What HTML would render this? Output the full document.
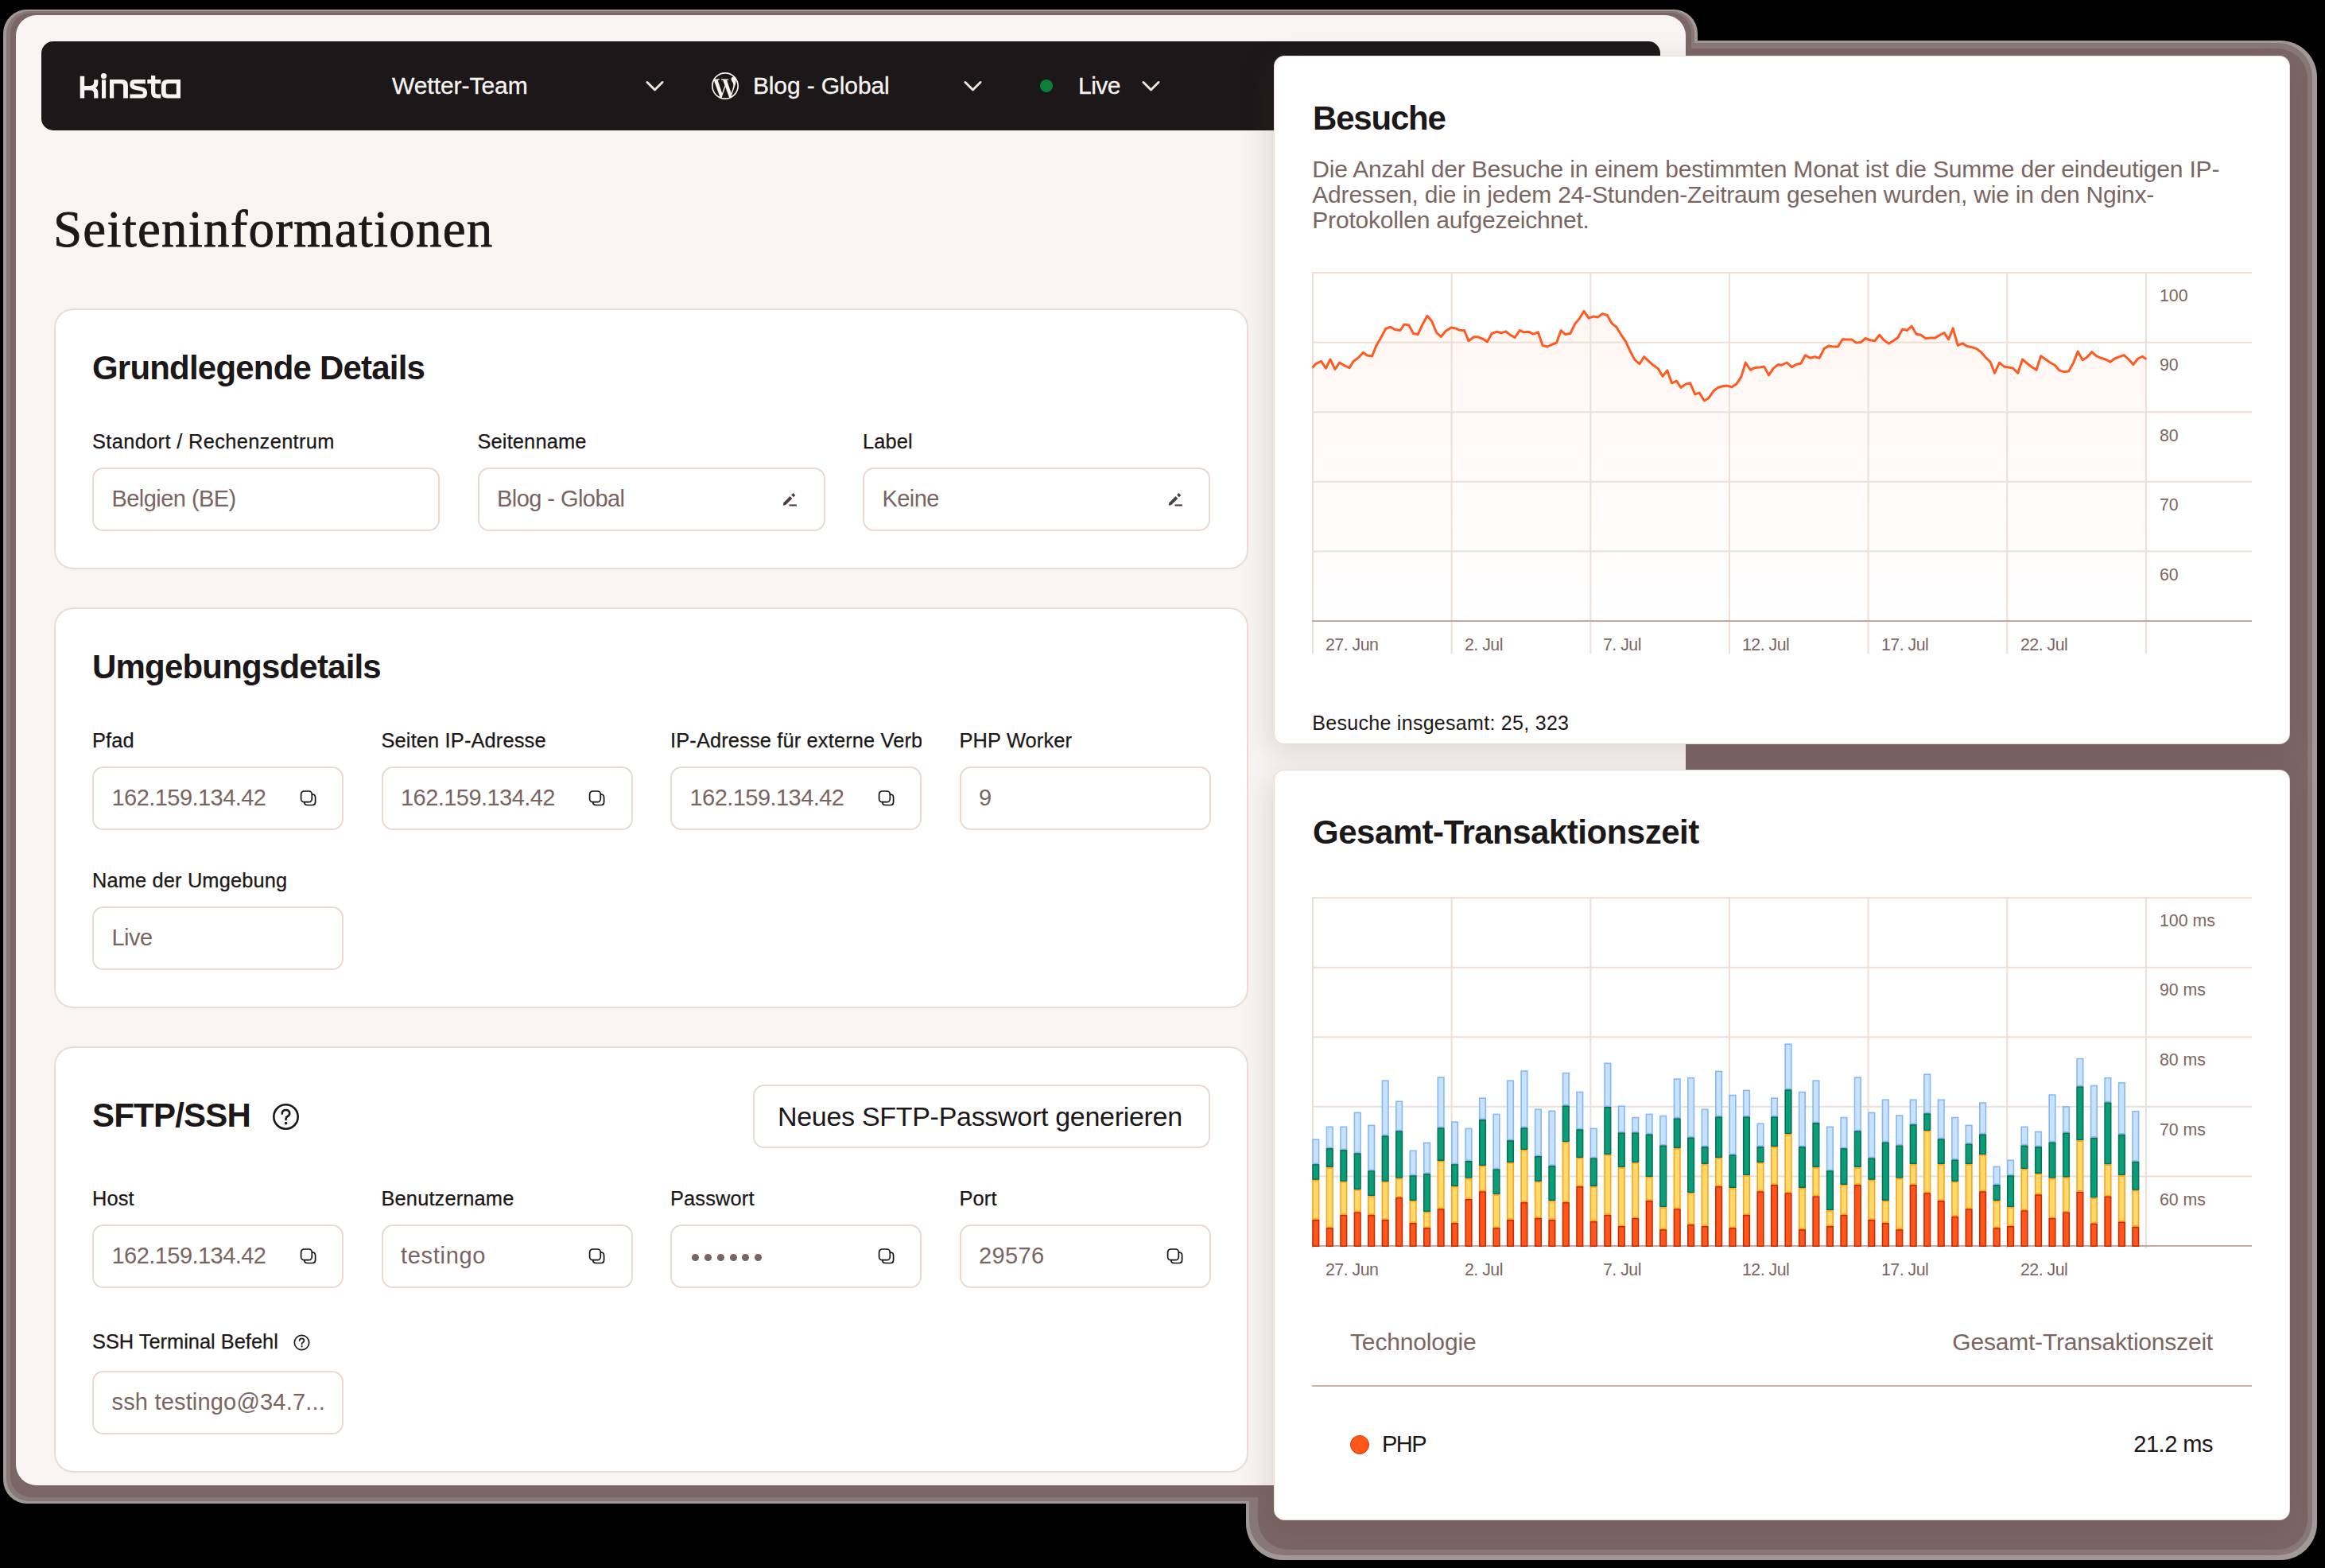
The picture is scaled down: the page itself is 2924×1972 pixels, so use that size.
<!DOCTYPE html>
<html><head><meta charset="utf-8"><title>Seiteninformationen</title>
<style>
html,body{margin:0;padding:0;}
body{width:2924px;height:1972px;background:#000;position:relative;overflow:hidden;font-family:'Liberation Sans', sans-serif;}
.t{position:absolute;white-space:nowrap;}
</style></head><body>
<div style="position:absolute;left:4px;top:12px;width:2131px;height:1879px;border-radius:30px;background:#a39797;"></div>
<div style="position:absolute;left:1567px;top:51px;width:1347px;height:1911px;border-radius:46px;background:#a39797;"></div>
<div style="position:absolute;left:8px;top:14px;width:2123px;height:1874px;border-radius:28px;background:#887979;"></div>
<div style="position:absolute;left:1570.5px;top:53.5px;width:1337.5px;height:1902.5px;border-radius:43px;background:#887979;"></div>
<div style="position:absolute;left:13px;top:16px;width:2114px;height:1867px;border-radius:26px;background:#7b6565;"></div>
<div style="position:absolute;left:1582px;top:61px;width:1320px;height:1888px;border-radius:38px;background:#7b6565;"></div>
<div style="position:absolute;left:20px;top:19px;width:2100px;height:1849px;border-radius:26px;background:#f8f4f1;"></div>
<div style="position:absolute;left:52px;top:52px;width:2036px;height:112px;border-radius:15px;background:#1c1819;"></div>
<svg style="position:absolute;left:0;top:0" width="240" height="140" viewBox="0 0 240 140">
<g fill="#f8f4f1">
<path d="M100.7 95.8H106.2V107.9H113Q118.2 107.9 118.2 103V100.3H123.4V103.5Q123.4 108.8 120.2 110.6Q123.4 112.6 123.4 117V123.6H118.2V118Q118.2 113.4 113.5 113.4H106.2V123.6H100.7Z"/>
<circle cx="130.5" cy="95.6" r="3.6"/>
<rect x="128" y="100.3" width="5.1" height="23.3"/>
<path d="M138 100H153.5Q160.9 100 160.9 107.5V123.6H155.1V108.5Q155.1 105.2 151.8 105.2H143.2V123.6H138Z"/>
<path d="M182.9 102.6H169Q165.9 102.6 165.9 106.2Q165.9 109.2 169.2 110L179 112.2Q182.5 113 182.5 116.7Q182.5 121 178.3 121H163.4" fill="none" stroke="#f8f4f1" stroke-width="5.2"/>
<path d="M192.65 95V116Q192.65 121 197.6 121H202.2" fill="none" stroke="#f8f4f1" stroke-width="5.2"/>
<rect x="185.3" y="100" width="16.9" height="5.1"/>
<path fill-rule="evenodd" d="M210.5 100H227V123.6H210.5Q202.9 123.6 202.9 116V107.6Q202.9 100 210.5 100ZM211.7 105.1Q208.7 105.1 208.7 108.1V115.5Q208.7 118.5 211.7 118.5H221.8V105.1Z"/>
</g></svg>
<div class="t" style="left:493.0px;top:92.6px;font-size:30px;line-height:30px;font-weight:400;color:#f8f4f1;letter-spacing:-0.05px;font-family:'Liberation Sans', sans-serif;-webkit-text-stroke:0.3px #f8f4f1;">Wetter-Team</div>
<div class="t" style="left:947.0px;top:92.6px;font-size:30px;line-height:30px;font-weight:400;color:#f8f4f1;letter-spacing:-0.15px;font-family:'Liberation Sans', sans-serif;-webkit-text-stroke:0.3px #f8f4f1;">Blog - Global</div>
<div class="t" style="left:1356.0px;top:92.6px;font-size:30px;line-height:30px;font-weight:400;color:#f8f4f1;letter-spacing:-0.5px;font-family:'Liberation Sans', sans-serif;-webkit-text-stroke:0.3px #f8f4f1;">Live</div>
<svg style="position:absolute;left:812px;top:101px" width="26" height="16" viewBox="0 0 26 16"><path d="M2 2.5L11.5 12L21 2.5" fill="none" stroke="#eee2db" stroke-width="3" stroke-linecap="round" stroke-linejoin="round"/></svg>
<svg style="position:absolute;left:1212px;top:101px" width="26" height="16" viewBox="0 0 26 16"><path d="M2 2.5L11.5 12L21 2.5" fill="none" stroke="#eee2db" stroke-width="3" stroke-linecap="round" stroke-linejoin="round"/></svg>
<svg style="position:absolute;left:1436px;top:101px" width="26" height="16" viewBox="0 0 26 16"><path d="M2 2.5L11.5 12L21 2.5" fill="none" stroke="#eee2db" stroke-width="3" stroke-linecap="round" stroke-linejoin="round"/></svg>
<svg style="position:absolute;left:895px;top:91px" width="34" height="34" viewBox="0 0 24 24"><path fill="#f8f4f1" d="M21.469 6.825c.84 1.537 1.318 3.3 1.318 5.175 0 3.979-2.156 7.456-5.363 9.325l3.295-9.527c.615-1.54.82-2.771.82-3.864 0-.405-.026-.78-.07-1.11m-7.981.105c.647-.03 1.232-.105 1.232-.105.582-.075.514-.93-.067-.899 0 0-1.755.135-2.88.135-1.064 0-2.85-.15-2.85-.15-.585-.03-.661.855-.075.885 0 0 .54.061 1.125.09l1.68 4.605-2.37 7.08L5.354 6.9c.649-.03 1.234-.1 1.234-.1.585-.075.516-.93-.065-.896 0 0-1.746.138-2.874.138-.2 0-.438-.008-.69-.015C4.911 3.15 8.235 1.215 12 1.215c2.809 0 5.365 1.072 7.286 2.833-.046-.003-.091-.009-.141-.009-1.06 0-1.812.923-1.812 1.914 0 .89.513 1.643 1.06 2.531.411.72.89 1.643.89 2.977 0 .915-.354 1.994-.821 3.479l-1.075 3.585-3.9-11.61.001.014zM12 22.784c-1.059 0-2.081-.153-3.048-.437l3.237-9.406 3.315 9.087c.024.053.05.101.078.149-1.12.393-2.325.609-3.582.609M1.211 12c0-1.564.336-3.05.935-4.39L7.29 21.709C3.694 19.96 1.212 16.271 1.211 12M12 0C5.385 0 0 5.385 0 12s5.385 12 12 12 12-5.385 12-12S18.615 0 12 0"/></svg>
<div style="position:absolute;left:1308px;top:100px;width:16px;height:16px;border-radius:50%;background:#0b7f3b;"></div>
<div class="t" style="left:67.0px;top:255.6px;font-size:65px;line-height:65px;font-weight:400;color:#1c1718;letter-spacing:1.2px;font-family:'Liberation Serif', serif;-webkit-text-stroke:0.8px #1c1718;">Seiteninformationen</div>
<div style="position:absolute;left:68px;top:388px;width:1502px;height:328px;box-sizing:border-box;border:2px solid #eadcd5;border-radius:24px;background:#fff;"></div>
<div style="position:absolute;left:68px;top:764px;width:1502px;height:504px;box-sizing:border-box;border:2px solid #eadcd5;border-radius:24px;background:#fff;"></div>
<div style="position:absolute;left:68px;top:1316px;width:1502px;height:536px;box-sizing:border-box;border:2px solid #eadcd5;border-radius:24px;background:#fff;"></div>
<div class="t" style="left:116.0px;top:442.1px;font-size:42px;line-height:42px;font-weight:700;color:#1c1718;letter-spacing:-0.8px;font-family:'Liberation Sans', sans-serif;">Grundlegende Details</div>
<div class="t" style="left:116.0px;top:542.7px;font-size:25.4px;line-height:25.4px;font-weight:400;color:#1c1718;letter-spacing:0.35px;font-family:'Liberation Sans', sans-serif;-webkit-text-stroke:0.25px #1c1718;">Standort / Rechenzentrum</div>
<div style="position:absolute;left:116px;top:588px;width:437px;height:80px;box-sizing:border-box;border:2px solid #e8d9d2;border-radius:14px;background:#fff;"></div>
<div class="t" style="left:140.5px;top:613.3px;font-size:29px;line-height:29px;font-weight:400;color:#7a6461;letter-spacing:-0.55px;font-family:'Liberation Sans', sans-serif;">Belgien (BE)</div>
<div class="t" style="left:600.5px;top:542.7px;font-size:25.4px;line-height:25.4px;font-weight:400;color:#1c1718;letter-spacing:0.15px;font-family:'Liberation Sans', sans-serif;-webkit-text-stroke:0.25px #1c1718;">Seitenname</div>
<div style="position:absolute;left:600.5px;top:588px;width:437px;height:80px;box-sizing:border-box;border:2px solid #e8d9d2;border-radius:14px;background:#fff;"></div>
<div class="t" style="left:625.0px;top:613.3px;font-size:29px;line-height:29px;font-weight:400;color:#7a6461;letter-spacing:-0.55px;font-family:'Liberation Sans', sans-serif;">Blog - Global</div>
<svg style="position:absolute;left:984.3px;top:617.5px" width="22" height="20" viewBox="0 0 22 20"><path d="M0.7 17.8L1.4 14.2L9.5 6.1L12.3 8.9L4.2 17Z" fill="#4a3f40"/><path d="M11.1 4.6L13.5 2.1L16.3 4.9L13.9 7.3Z" fill="#4a3f40"/><rect x="8.5" y="16.4" width="9.4" height="2.1" fill="#4a3f40"/></svg>
<div class="t" style="left:1085.0px;top:542.7px;font-size:25.4px;line-height:25.4px;font-weight:400;color:#1c1718;letter-spacing:0.15px;font-family:'Liberation Sans', sans-serif;-webkit-text-stroke:0.25px #1c1718;">Label</div>
<div style="position:absolute;left:1085px;top:588px;width:437px;height:80px;box-sizing:border-box;border:2px solid #e8d9d2;border-radius:14px;background:#fff;"></div>
<div class="t" style="left:1109.5px;top:613.3px;font-size:29px;line-height:29px;font-weight:400;color:#7a6461;letter-spacing:-0.55px;font-family:'Liberation Sans', sans-serif;">Keine</div>
<svg style="position:absolute;left:1468.8px;top:617.5px" width="22" height="20" viewBox="0 0 22 20"><path d="M0.7 17.8L1.4 14.2L9.5 6.1L12.3 8.9L4.2 17Z" fill="#4a3f40"/><path d="M11.1 4.6L13.5 2.1L16.3 4.9L13.9 7.3Z" fill="#4a3f40"/><rect x="8.5" y="16.4" width="9.4" height="2.1" fill="#4a3f40"/></svg>
<div class="t" style="left:116.0px;top:818.2px;font-size:42px;line-height:42px;font-weight:700;color:#1c1718;letter-spacing:-0.8px;font-family:'Liberation Sans', sans-serif;">Umgebungsdetails</div>
<div class="t" style="left:116.0px;top:918.7px;font-size:25.4px;line-height:25.4px;font-weight:400;color:#1c1718;letter-spacing:0.15px;font-family:'Liberation Sans', sans-serif;-webkit-text-stroke:0.25px #1c1718;">Pfad</div>
<div style="position:absolute;left:116px;top:964px;width:316px;height:80px;box-sizing:border-box;border:2px solid #e8d9d2;border-radius:14px;background:#fff;"></div>
<div class="t" style="left:140.5px;top:989.3px;font-size:29px;line-height:29px;font-weight:400;color:#7a6461;letter-spacing:-0.55px;font-family:'Liberation Sans', sans-serif;">162.159.134.42</div>
<svg style="position:absolute;left:376.5px;top:994px" width="24" height="24" viewBox="0 0 24 24"><rect x="1.6" y="1" width="13.7" height="13.7" rx="4" fill="none" stroke="#111" stroke-width="1.7"/><path d="M15.3 5H15.6Q19.6 5 19.6 9V14.5Q19.6 18.5 15.6 18.5H9.8Q5.8 18.5 5.8 14.7" fill="none" stroke="#111" stroke-width="1.7"/></svg>
<div class="t" style="left:479.5px;top:918.7px;font-size:25.4px;line-height:25.4px;font-weight:400;color:#1c1718;letter-spacing:0.15px;font-family:'Liberation Sans', sans-serif;-webkit-text-stroke:0.25px #1c1718;">Seiten IP-Adresse</div>
<div style="position:absolute;left:479.5px;top:964px;width:316px;height:80px;box-sizing:border-box;border:2px solid #e8d9d2;border-radius:14px;background:#fff;"></div>
<div class="t" style="left:504.0px;top:989.3px;font-size:29px;line-height:29px;font-weight:400;color:#7a6461;letter-spacing:-0.55px;font-family:'Liberation Sans', sans-serif;">162.159.134.42</div>
<svg style="position:absolute;left:740.0px;top:994px" width="24" height="24" viewBox="0 0 24 24"><rect x="1.6" y="1" width="13.7" height="13.7" rx="4" fill="none" stroke="#111" stroke-width="1.7"/><path d="M15.3 5H15.6Q19.6 5 19.6 9V14.5Q19.6 18.5 15.6 18.5H9.8Q5.8 18.5 5.8 14.7" fill="none" stroke="#111" stroke-width="1.7"/></svg>
<div class="t" style="left:843.0px;top:918.7px;font-size:25.4px;line-height:25.4px;font-weight:400;color:#1c1718;letter-spacing:0.15px;font-family:'Liberation Sans', sans-serif;width:316px;overflow:hidden;-webkit-text-stroke:0.25px #1c1718;">IP-Adresse für externe Verbindungen</div>
<div style="position:absolute;left:843px;top:964px;width:316px;height:80px;box-sizing:border-box;border:2px solid #e8d9d2;border-radius:14px;background:#fff;"></div>
<div class="t" style="left:867.5px;top:989.3px;font-size:29px;line-height:29px;font-weight:400;color:#7a6461;letter-spacing:-0.55px;font-family:'Liberation Sans', sans-serif;">162.159.134.42</div>
<svg style="position:absolute;left:1103.5px;top:994px" width="24" height="24" viewBox="0 0 24 24"><rect x="1.6" y="1" width="13.7" height="13.7" rx="4" fill="none" stroke="#111" stroke-width="1.7"/><path d="M15.3 5H15.6Q19.6 5 19.6 9V14.5Q19.6 18.5 15.6 18.5H9.8Q5.8 18.5 5.8 14.7" fill="none" stroke="#111" stroke-width="1.7"/></svg>
<div class="t" style="left:1206.5px;top:918.7px;font-size:25.4px;line-height:25.4px;font-weight:400;color:#1c1718;letter-spacing:0.15px;font-family:'Liberation Sans', sans-serif;-webkit-text-stroke:0.25px #1c1718;">PHP Worker</div>
<div style="position:absolute;left:1206.5px;top:964px;width:316px;height:80px;box-sizing:border-box;border:2px solid #e8d9d2;border-radius:14px;background:#fff;"></div>
<div class="t" style="left:1231.0px;top:989.3px;font-size:29px;line-height:29px;font-weight:400;color:#7a6461;letter-spacing:-0.55px;font-family:'Liberation Sans', sans-serif;">9</div>
<div class="t" style="left:116.0px;top:1094.7px;font-size:25.4px;line-height:25.4px;font-weight:400;color:#1c1718;letter-spacing:0.15px;font-family:'Liberation Sans', sans-serif;-webkit-text-stroke:0.25px #1c1718;">Name der Umgebung</div>
<div style="position:absolute;left:116px;top:1140px;width:316px;height:80px;box-sizing:border-box;border:2px solid #e8d9d2;border-radius:14px;background:#fff;"></div>
<div class="t" style="left:140.5px;top:1165.3px;font-size:29px;line-height:29px;font-weight:400;color:#7a6461;letter-spacing:-0.55px;font-family:'Liberation Sans', sans-serif;">Live</div>
<div class="t" style="left:116.0px;top:1382.2px;font-size:42px;line-height:42px;font-weight:700;color:#1c1718;letter-spacing:-0.8px;font-family:'Liberation Sans', sans-serif;">SFTP/SSH</div>
<svg style="position:absolute;left:341px;top:1386px" width="37" height="37" viewBox="0 0 37 37"><circle cx="18.5" cy="18.5" r="15.2" fill="none" stroke="#1c1718" stroke-width="2.6"/><path d="M13.8 14.6Q13.8 10 18.5 10Q23.2 10 23.2 14.3Q23.2 17 20.3 18.3Q18.6 19.1 18.6 21V22" fill="none" stroke="#1c1718" stroke-width="2.6" stroke-linecap="round"/><circle cx="18.6" cy="26.6" r="1.8" fill="#1c1718"/></svg>
<div style="position:absolute;left:947px;top:1364px;width:575px;height:80px;box-sizing:border-box;border:2px solid #e8d9d2;border-radius:14px;background:#fff;"></div>
<div class="t" style="left:978.0px;top:1387.2px;font-size:34px;line-height:34px;font-weight:400;color:#1c1718;letter-spacing:-0.3px;font-family:'Liberation Sans', sans-serif;">Neues SFTP-Passwort generieren</div>
<div class="t" style="left:116.0px;top:1494.7px;font-size:25.4px;line-height:25.4px;font-weight:400;color:#1c1718;letter-spacing:0.15px;font-family:'Liberation Sans', sans-serif;-webkit-text-stroke:0.25px #1c1718;">Host</div>
<div style="position:absolute;left:116px;top:1540px;width:316px;height:80px;box-sizing:border-box;border:2px solid #e8d9d2;border-radius:14px;background:#fff;"></div>
<div class="t" style="left:140.5px;top:1565.3px;font-size:29px;line-height:29px;font-weight:400;color:#7a6461;letter-spacing:-0.55px;font-family:'Liberation Sans', sans-serif;">162.159.134.42</div>
<svg style="position:absolute;left:376.5px;top:1570px" width="24" height="24" viewBox="0 0 24 24"><rect x="1.6" y="1" width="13.7" height="13.7" rx="4" fill="none" stroke="#111" stroke-width="1.7"/><path d="M15.3 5H15.6Q19.6 5 19.6 9V14.5Q19.6 18.5 15.6 18.5H9.8Q5.8 18.5 5.8 14.7" fill="none" stroke="#111" stroke-width="1.7"/></svg>
<div class="t" style="left:479.5px;top:1494.7px;font-size:25.4px;line-height:25.4px;font-weight:400;color:#1c1718;letter-spacing:0.15px;font-family:'Liberation Sans', sans-serif;-webkit-text-stroke:0.25px #1c1718;">Benutzername</div>
<div style="position:absolute;left:479.5px;top:1540px;width:316px;height:80px;box-sizing:border-box;border:2px solid #e8d9d2;border-radius:14px;background:#fff;"></div>
<div class="t" style="left:504.0px;top:1565.3px;font-size:29px;line-height:29px;font-weight:400;color:#7a6461;letter-spacing:0.7px;font-family:'Liberation Sans', sans-serif;">testingo</div>
<svg style="position:absolute;left:740.0px;top:1570px" width="24" height="24" viewBox="0 0 24 24"><rect x="1.6" y="1" width="13.7" height="13.7" rx="4" fill="none" stroke="#111" stroke-width="1.7"/><path d="M15.3 5H15.6Q19.6 5 19.6 9V14.5Q19.6 18.5 15.6 18.5H9.8Q5.8 18.5 5.8 14.7" fill="none" stroke="#111" stroke-width="1.7"/></svg>
<div class="t" style="left:843.0px;top:1494.7px;font-size:25.4px;line-height:25.4px;font-weight:400;color:#1c1718;letter-spacing:0.15px;font-family:'Liberation Sans', sans-serif;-webkit-text-stroke:0.25px #1c1718;">Passwort</div>
<div style="position:absolute;left:843px;top:1540px;width:316px;height:80px;box-sizing:border-box;border:2px solid #e8d9d2;border-radius:14px;background:#fff;"></div>
<div style="position:absolute;left:870.3px;top:1577.2px;width:9px;height:9px;border-radius:50%;background:#7a6461"></div><div style="position:absolute;left:886.0px;top:1577.2px;width:9px;height:9px;border-radius:50%;background:#7a6461"></div><div style="position:absolute;left:901.8px;top:1577.2px;width:9px;height:9px;border-radius:50%;background:#7a6461"></div><div style="position:absolute;left:917.5px;top:1577.2px;width:9px;height:9px;border-radius:50%;background:#7a6461"></div><div style="position:absolute;left:933.3px;top:1577.2px;width:9px;height:9px;border-radius:50%;background:#7a6461"></div><div style="position:absolute;left:949.0px;top:1577.2px;width:9px;height:9px;border-radius:50%;background:#7a6461"></div>
<svg style="position:absolute;left:1103.5px;top:1570px" width="24" height="24" viewBox="0 0 24 24"><rect x="1.6" y="1" width="13.7" height="13.7" rx="4" fill="none" stroke="#111" stroke-width="1.7"/><path d="M15.3 5H15.6Q19.6 5 19.6 9V14.5Q19.6 18.5 15.6 18.5H9.8Q5.8 18.5 5.8 14.7" fill="none" stroke="#111" stroke-width="1.7"/></svg>
<div class="t" style="left:1206.5px;top:1494.7px;font-size:25.4px;line-height:25.4px;font-weight:400;color:#1c1718;letter-spacing:0.15px;font-family:'Liberation Sans', sans-serif;-webkit-text-stroke:0.25px #1c1718;">Port</div>
<div style="position:absolute;left:1206.5px;top:1540px;width:316px;height:80px;box-sizing:border-box;border:2px solid #e8d9d2;border-radius:14px;background:#fff;"></div>
<div class="t" style="left:1231.0px;top:1565.3px;font-size:29px;line-height:29px;font-weight:400;color:#7a6461;letter-spacing:0.4px;font-family:'Liberation Sans', sans-serif;">29576</div>
<svg style="position:absolute;left:1467.0px;top:1570px" width="24" height="24" viewBox="0 0 24 24"><rect x="1.6" y="1" width="13.7" height="13.7" rx="4" fill="none" stroke="#111" stroke-width="1.7"/><path d="M15.3 5H15.6Q19.6 5 19.6 9V14.5Q19.6 18.5 15.6 18.5H9.8Q5.8 18.5 5.8 14.7" fill="none" stroke="#111" stroke-width="1.7"/></svg>
<div class="t" style="left:116.0px;top:1674.9px;font-size:25.4px;line-height:25.4px;font-weight:400;color:#1c1718;letter-spacing:0px;font-family:'Liberation Sans', sans-serif;-webkit-text-stroke:0.25px #1c1718;">SSH Terminal Befehl</div>
<div style="position:absolute;left:116px;top:1724px;width:316px;height:80px;box-sizing:border-box;border:2px solid #e8d9d2;border-radius:14px;background:#fff;"></div>
<div class="t" style="left:140.5px;top:1749.3px;font-size:29px;line-height:29px;font-weight:400;color:#7a6461;letter-spacing:0.18px;font-family:'Liberation Sans', sans-serif;">ssh testingo@34.7...</div>
<svg style="position:absolute;left:368px;top:1677px" width="23" height="23" viewBox="0 0 23 23"><circle cx="11.5" cy="11.5" r="9.2" fill="none" stroke="#1c1718" stroke-width="1.7"/><path d="M8.6 9.1Q8.6 6.3 11.5 6.3Q14.4 6.3 14.4 8.9Q14.4 10.6 12.6 11.4Q11.6 11.9 11.6 13V13.6" fill="none" stroke="#1c1718" stroke-width="1.7" stroke-linecap="round"/><circle cx="11.6" cy="16.4" r="1.1" fill="#1c1718"/></svg>
<div style="position:absolute;left:1602px;top:70px;width:1278px;height:866px;box-sizing:border-box;border:1.75px solid #ebdcd4;border-radius:13px;background:#fff;box-shadow:-6px 10px 36px rgba(90,60,55,0.16);"></div>
<div style="position:absolute;left:1602px;top:968px;width:1278px;height:944px;box-sizing:border-box;border:1.75px solid #ebdcd4;border-radius:13px;background:#fff;box-shadow:-6px 10px 36px rgba(90,60,55,0.16);"></div>
<div class="t" style="left:1651.0px;top:128.3px;font-size:42px;line-height:42px;font-weight:700;color:#1c1718;letter-spacing:-1.2px;font-family:'Liberation Sans', sans-serif;">Besuche</div>
<div class="t" style="left:1650.3px;top:198.4px;font-size:30px;line-height:30px;font-weight:400;color:#7b6562;letter-spacing:-0.2px;font-family:'Liberation Sans', sans-serif;">Die Anzahl der Besuche in einem bestimmten Monat ist die Summe der eindeutigen IP-</div>
<div class="t" style="left:1650.3px;top:230.3px;font-size:30px;line-height:30px;font-weight:400;color:#7b6562;letter-spacing:-0.2px;font-family:'Liberation Sans', sans-serif;">Adressen, die in jedem 24-Stunden-Zeitraum gesehen wurden, wie in den Nginx-</div>
<div class="t" style="left:1650.3px;top:262.2px;font-size:30px;line-height:30px;font-weight:400;color:#7b6562;letter-spacing:-0.2px;font-family:'Liberation Sans', sans-serif;">Protokollen aufgezeichnet.</div>
<svg style="position:absolute;left:0;top:0" width="2924" height="1972" viewBox="0 0 2924 1972"><defs><linearGradient id="ag" x1="0" y1="0" x2="0" y2="1"><stop offset="0" stop-color="#ff6a33" stop-opacity="0.06"/><stop offset="1" stop-color="#ff6a33" stop-opacity="0.0"/></linearGradient></defs><path d="M1650.5 462.6 L1654.8 457.6 L1661.5 454.3 L1667.4 463.3 L1673.0 452.0 L1679.0 464.3 L1684.7 456.0 L1691.3 460.0 L1697.0 462.6 L1702.2 454.3 L1707.9 450.3 L1714.5 443.4 L1719.5 447.0 L1725.5 448.0 L1731.0 434.4 L1736.0 426.0 L1742.7 413.5 L1748.7 411.2 L1754.3 414.5 L1761.0 415.5 L1766.0 408.0 L1771.9 408.9 L1777.5 419.5 L1783.2 420.5 L1789.0 408.0 L1795.0 397.3 L1800.7 404.0 L1806.7 418.5 L1812.3 423.5 L1818.3 416.2 L1825.0 411.9 L1830.6 412.9 L1835.5 415.2 L1841.5 415.5 L1847.0 428.8 L1853.8 423.8 L1858.8 423.8 L1864.7 426.1 L1870.4 430.0 L1876.0 419.5 L1882.6 417.2 L1888.0 418.8 L1893.6 416.8 L1899.2 421.1 L1905.2 424.5 L1911.2 415.5 L1916.8 417.8 L1922.4 417.2 L1928.4 420.1 L1934.4 417.8 L1940.0 434.4 L1946.0 436.0 L1951.6 433.4 L1957.6 431.0 L1963.2 415.5 L1968.2 420.5 L1974.8 419.5 L1980.8 407.2 L1986.4 400.6 L1992.0 391.3 L1998.0 400.2 L2004.0 397.9 L2009.6 398.9 L2015.3 394.6 L2021.2 396.3 L2027.2 406.9 L2032.9 411.2 L2038.8 421.1 L2044.5 429.4 L2050.4 442.0 L2056.0 452.6 L2062.0 457.6 L2067.7 448.7 L2073.6 454.3 L2079.3 459.3 L2085.3 463.6 L2090.9 473.2 L2096.9 465.9 L2102.5 481.8 L2108.5 479.2 L2114.0 487.5 L2120.0 483.1 L2125.7 481.8 L2131.7 495.8 L2137.3 494.1 L2143.3 504.0 L2148.9 500.7 L2154.9 491.8 L2160.5 487.5 L2166.5 485.8 L2172.1 485.1 L2178.0 486.8 L2183.7 483.1 L2189.7 474.2 L2195.3 456.0 L2201.3 465.2 L2207.0 462.6 L2212.9 461.9 L2218.6 460.9 L2224.5 471.9 L2230.2 463.3 L2236.1 458.6 L2240.0 459.3 L2247.3 456.0 L2253.3 461.6 L2259.2 458.3 L2264.9 457.0 L2270.5 446.7 L2276.5 450.3 L2282.5 448.7 L2288.1 450.3 L2294.1 438.4 L2299.7 435.1 L2305.7 436.1 L2311.3 436.1 L2317.3 426.8 L2322.9 427.1 L2328.9 427.1 L2334.5 431.1 L2340.5 430.4 L2346.1 425.5 L2352.1 427.8 L2357.7 428.8 L2363.7 421.2 L2369.3 427.8 L2375.3 432.1 L2381.0 428.8 L2386.9 424.5 L2392.6 413.9 L2398.5 415.5 L2404.2 410.2 L2410.1 420.2 L2415.8 421.2 L2421.7 425.5 L2427.4 425.1 L2433.4 425.1 L2439.0 421.8 L2445.0 418.5 L2450.6 426.8 L2456.2 412.9 L2462.2 434.4 L2468.2 431.8 L2473.8 435.4 L2479.8 436.7 L2485.4 438.4 L2491.4 442.7 L2497.0 449.3 L2503.0 455.0 L2508.6 469.2 L2514.6 456.0 L2520.2 461.0 L2526.2 462.0 L2531.9 463.3 L2537.8 469.2 L2543.5 452.0 L2549.4 457.0 L2555.1 461.6 L2561.0 465.3 L2566.7 447.7 L2572.7 452.0 L2578.3 456.0 L2584.3 459.3 L2589.9 465.9 L2595.9 467.6 L2601.5 466.9 L2607.5 456.6 L2613.1 442.0 L2619.1 452.7 L2624.7 449.3 L2630.7 442.7 L2636.3 447.7 L2642.3 450.3 L2648.0 452.0 L2653.9 455.3 L2659.5 451.0 L2665.5 448.7 L2671.2 446.7 L2677.1 452.0 L2682.8 458.6 L2688.7 451.0 L2694.4 448.3 L2699.3 451.7 L2699.3 780 L1650.5 780 Z" fill="url(#ag)"/><rect x="1650" y="342.10" width="1182" height="2" fill="#ecdfd8"/><rect x="1650" y="429.68" width="1182" height="2" fill="#ecdfd8"/><rect x="1650" y="517.26" width="1182" height="2" fill="#ecdfd8"/><rect x="1650" y="604.84" width="1182" height="2" fill="#ecdfd8"/><rect x="1650" y="692.42" width="1182" height="2" fill="#ecdfd8"/><rect x="1650.00" y="342.10" width="2" height="479.90" fill="#ecdfd8"/><rect x="1824.65" y="342.10" width="2" height="479.90" fill="#ecdfd8"/><rect x="1999.30" y="342.10" width="2" height="479.90" fill="#ecdfd8"/><rect x="2173.95" y="342.10" width="2" height="479.90" fill="#ecdfd8"/><rect x="2348.60" y="342.10" width="2" height="479.90" fill="#ecdfd8"/><rect x="2523.25" y="342.10" width="2" height="479.90" fill="#ecdfd8"/><rect x="2697.90" y="342.10" width="2" height="479.90" fill="#ecdfd8"/><rect x="1650" y="780.00" width="1182" height="2" fill="#c3a8a0"/><path d="M1650.5 462.6 L1654.8 457.6 L1661.5 454.3 L1667.4 463.3 L1673.0 452.0 L1679.0 464.3 L1684.7 456.0 L1691.3 460.0 L1697.0 462.6 L1702.2 454.3 L1707.9 450.3 L1714.5 443.4 L1719.5 447.0 L1725.5 448.0 L1731.0 434.4 L1736.0 426.0 L1742.7 413.5 L1748.7 411.2 L1754.3 414.5 L1761.0 415.5 L1766.0 408.0 L1771.9 408.9 L1777.5 419.5 L1783.2 420.5 L1789.0 408.0 L1795.0 397.3 L1800.7 404.0 L1806.7 418.5 L1812.3 423.5 L1818.3 416.2 L1825.0 411.9 L1830.6 412.9 L1835.5 415.2 L1841.5 415.5 L1847.0 428.8 L1853.8 423.8 L1858.8 423.8 L1864.7 426.1 L1870.4 430.0 L1876.0 419.5 L1882.6 417.2 L1888.0 418.8 L1893.6 416.8 L1899.2 421.1 L1905.2 424.5 L1911.2 415.5 L1916.8 417.8 L1922.4 417.2 L1928.4 420.1 L1934.4 417.8 L1940.0 434.4 L1946.0 436.0 L1951.6 433.4 L1957.6 431.0 L1963.2 415.5 L1968.2 420.5 L1974.8 419.5 L1980.8 407.2 L1986.4 400.6 L1992.0 391.3 L1998.0 400.2 L2004.0 397.9 L2009.6 398.9 L2015.3 394.6 L2021.2 396.3 L2027.2 406.9 L2032.9 411.2 L2038.8 421.1 L2044.5 429.4 L2050.4 442.0 L2056.0 452.6 L2062.0 457.6 L2067.7 448.7 L2073.6 454.3 L2079.3 459.3 L2085.3 463.6 L2090.9 473.2 L2096.9 465.9 L2102.5 481.8 L2108.5 479.2 L2114.0 487.5 L2120.0 483.1 L2125.7 481.8 L2131.7 495.8 L2137.3 494.1 L2143.3 504.0 L2148.9 500.7 L2154.9 491.8 L2160.5 487.5 L2166.5 485.8 L2172.1 485.1 L2178.0 486.8 L2183.7 483.1 L2189.7 474.2 L2195.3 456.0 L2201.3 465.2 L2207.0 462.6 L2212.9 461.9 L2218.6 460.9 L2224.5 471.9 L2230.2 463.3 L2236.1 458.6 L2240.0 459.3 L2247.3 456.0 L2253.3 461.6 L2259.2 458.3 L2264.9 457.0 L2270.5 446.7 L2276.5 450.3 L2282.5 448.7 L2288.1 450.3 L2294.1 438.4 L2299.7 435.1 L2305.7 436.1 L2311.3 436.1 L2317.3 426.8 L2322.9 427.1 L2328.9 427.1 L2334.5 431.1 L2340.5 430.4 L2346.1 425.5 L2352.1 427.8 L2357.7 428.8 L2363.7 421.2 L2369.3 427.8 L2375.3 432.1 L2381.0 428.8 L2386.9 424.5 L2392.6 413.9 L2398.5 415.5 L2404.2 410.2 L2410.1 420.2 L2415.8 421.2 L2421.7 425.5 L2427.4 425.1 L2433.4 425.1 L2439.0 421.8 L2445.0 418.5 L2450.6 426.8 L2456.2 412.9 L2462.2 434.4 L2468.2 431.8 L2473.8 435.4 L2479.8 436.7 L2485.4 438.4 L2491.4 442.7 L2497.0 449.3 L2503.0 455.0 L2508.6 469.2 L2514.6 456.0 L2520.2 461.0 L2526.2 462.0 L2531.9 463.3 L2537.8 469.2 L2543.5 452.0 L2549.4 457.0 L2555.1 461.6 L2561.0 465.3 L2566.7 447.7 L2572.7 452.0 L2578.3 456.0 L2584.3 459.3 L2589.9 465.9 L2595.9 467.6 L2601.5 466.9 L2607.5 456.6 L2613.1 442.0 L2619.1 452.7 L2624.7 449.3 L2630.7 442.7 L2636.3 447.7 L2642.3 450.3 L2648.0 452.0 L2653.9 455.3 L2659.5 451.0 L2665.5 448.7 L2671.2 446.7 L2677.1 452.0 L2682.8 458.6 L2688.7 451.0 L2694.4 448.3 L2699.3 451.7" fill="none" stroke="#ff5a1f" stroke-width="3" stroke-linejoin="round"/><rect x="1650" y="1128.20" width="1182" height="2" fill="#ecdfd8"/><rect x="1650" y="1215.74" width="1182" height="2" fill="#ecdfd8"/><rect x="1650" y="1303.28" width="1182" height="2" fill="#ecdfd8"/><rect x="1650" y="1390.82" width="1182" height="2" fill="#ecdfd8"/><rect x="1650" y="1478.36" width="1182" height="2" fill="#ecdfd8"/><rect x="1650.00" y="1128.20" width="2" height="441.80" fill="#ecdfd8"/><rect x="1824.65" y="1128.20" width="2" height="441.80" fill="#ecdfd8"/><rect x="1999.30" y="1128.20" width="2" height="441.80" fill="#ecdfd8"/><rect x="2173.95" y="1128.20" width="2" height="441.80" fill="#ecdfd8"/><rect x="2348.60" y="1128.20" width="2" height="441.80" fill="#ecdfd8"/><rect x="2523.25" y="1128.20" width="2" height="441.80" fill="#ecdfd8"/><rect x="2697.90" y="1128.20" width="2" height="441.80" fill="#ecdfd8"/><rect x="1650" y="1565.90" width="1182" height="2" fill="#c3a8a0"/><rect x="1651.0" y="1433.2" width="7.6" height="30.0" fill="#c9e2fb" stroke="#84b8f6" stroke-width="1.6"/><rect x="1651.0" y="1464.9" width="7.6" height="18.2" fill="#0a9e78" stroke="#0b6f55" stroke-width="1.6"/><rect x="1651.0" y="1484.7" width="7.6" height="48.4" fill="#fdd96e" stroke="#fca415" stroke-width="1.6"/><rect x="1651.0" y="1534.7" width="7.6" height="32.5" fill="#ff5719" stroke="#c62c04" stroke-width="1.6"/><rect x="1668.5" y="1417.3" width="7.6" height="26.0" fill="#c9e2fb" stroke="#84b8f6" stroke-width="1.6"/><rect x="1668.5" y="1444.9" width="7.6" height="22.5" fill="#0a9e78" stroke="#0b6f55" stroke-width="1.6"/><rect x="1668.5" y="1469.0" width="7.6" height="74.3" fill="#fdd96e" stroke="#fca415" stroke-width="1.6"/><rect x="1668.5" y="1544.9" width="7.6" height="22.3" fill="#ff5719" stroke="#c62c04" stroke-width="1.6"/><rect x="1686.0" y="1417.3" width="7.6" height="28.0" fill="#c9e2fb" stroke="#84b8f6" stroke-width="1.6"/><rect x="1686.0" y="1446.9" width="7.6" height="38.2" fill="#0a9e78" stroke="#0b6f55" stroke-width="1.6"/><rect x="1686.0" y="1486.7" width="7.6" height="40.2" fill="#fdd96e" stroke="#fca415" stroke-width="1.6"/><rect x="1686.0" y="1528.6" width="7.6" height="38.6" fill="#ff5719" stroke="#c62c04" stroke-width="1.6"/><rect x="1703.4" y="1399.4" width="7.6" height="50.0" fill="#c9e2fb" stroke="#84b8f6" stroke-width="1.6"/><rect x="1703.4" y="1451.0" width="7.6" height="44.3" fill="#0a9e78" stroke="#0b6f55" stroke-width="1.6"/><rect x="1703.4" y="1496.9" width="7.6" height="26.6" fill="#fdd96e" stroke="#fca415" stroke-width="1.6"/><rect x="1703.4" y="1525.1" width="7.6" height="42.1" fill="#ff5719" stroke="#c62c04" stroke-width="1.6"/><rect x="1720.9" y="1415.3" width="7.6" height="56.2" fill="#c9e2fb" stroke="#84b8f6" stroke-width="1.6"/><rect x="1720.9" y="1473.0" width="7.6" height="30.4" fill="#0a9e78" stroke="#0b6f55" stroke-width="1.6"/><rect x="1720.9" y="1505.1" width="7.6" height="21.9" fill="#fdd96e" stroke="#fca415" stroke-width="1.6"/><rect x="1720.9" y="1528.6" width="7.6" height="38.6" fill="#ff5719" stroke="#c62c04" stroke-width="1.6"/><rect x="1738.4" y="1359.2" width="7.6" height="68.2" fill="#c9e2fb" stroke="#84b8f6" stroke-width="1.6"/><rect x="1738.4" y="1429.0" width="7.6" height="56.2" fill="#0a9e78" stroke="#0b6f55" stroke-width="1.6"/><rect x="1738.4" y="1486.7" width="7.6" height="46.4" fill="#fdd96e" stroke="#fca415" stroke-width="1.6"/><rect x="1738.4" y="1534.7" width="7.6" height="32.5" fill="#ff5719" stroke="#c62c04" stroke-width="1.6"/><rect x="1755.8" y="1385.3" width="7.6" height="36.2" fill="#c9e2fb" stroke="#84b8f6" stroke-width="1.6"/><rect x="1755.8" y="1423.0" width="7.6" height="58.0" fill="#0a9e78" stroke="#0b6f55" stroke-width="1.6"/><rect x="1755.8" y="1482.6" width="7.6" height="22.5" fill="#fdd96e" stroke="#fca415" stroke-width="1.6"/><rect x="1755.8" y="1506.7" width="7.6" height="60.5" fill="#ff5719" stroke="#c62c04" stroke-width="1.6"/><rect x="1773.3" y="1447.3" width="7.6" height="30.0" fill="#c9e2fb" stroke="#84b8f6" stroke-width="1.6"/><rect x="1773.3" y="1479.0" width="7.6" height="30.2" fill="#0a9e78" stroke="#0b6f55" stroke-width="1.6"/><rect x="1773.3" y="1510.8" width="7.6" height="26.4" fill="#fdd96e" stroke="#fca415" stroke-width="1.6"/><rect x="1773.3" y="1538.8" width="7.6" height="28.4" fill="#ff5719" stroke="#c62c04" stroke-width="1.6"/><rect x="1790.8" y="1437.3" width="7.6" height="38.0" fill="#c9e2fb" stroke="#84b8f6" stroke-width="1.6"/><rect x="1790.8" y="1476.9" width="7.6" height="46.6" fill="#0a9e78" stroke="#0b6f55" stroke-width="1.6"/><rect x="1790.8" y="1525.1" width="7.6" height="18.2" fill="#fdd96e" stroke="#fca415" stroke-width="1.6"/><rect x="1790.8" y="1544.9" width="7.6" height="22.3" fill="#ff5719" stroke="#c62c04" stroke-width="1.6"/><rect x="1808.3" y="1355.1" width="7.6" height="62.3" fill="#c9e2fb" stroke="#84b8f6" stroke-width="1.6"/><rect x="1808.3" y="1419.0" width="7.6" height="40.2" fill="#0a9e78" stroke="#0b6f55" stroke-width="1.6"/><rect x="1808.3" y="1460.8" width="7.6" height="58.6" fill="#fdd96e" stroke="#fca415" stroke-width="1.6"/><rect x="1808.3" y="1521.0" width="7.6" height="46.2" fill="#ff5719" stroke="#c62c04" stroke-width="1.6"/><rect x="1825.8" y="1411.2" width="7.6" height="52.1" fill="#c9e2fb" stroke="#84b8f6" stroke-width="1.6"/><rect x="1825.8" y="1464.9" width="7.6" height="26.4" fill="#0a9e78" stroke="#0b6f55" stroke-width="1.6"/><rect x="1825.8" y="1492.8" width="7.6" height="44.3" fill="#fdd96e" stroke="#fca415" stroke-width="1.6"/><rect x="1825.8" y="1538.8" width="7.6" height="28.4" fill="#ff5719" stroke="#c62c04" stroke-width="1.6"/><rect x="1843.2" y="1419.4" width="7.6" height="39.8" fill="#c9e2fb" stroke="#84b8f6" stroke-width="1.6"/><rect x="1843.2" y="1460.8" width="7.6" height="20.2" fill="#0a9e78" stroke="#0b6f55" stroke-width="1.6"/><rect x="1843.2" y="1482.6" width="7.6" height="24.5" fill="#fdd96e" stroke="#fca415" stroke-width="1.6"/><rect x="1843.2" y="1508.8" width="7.6" height="58.4" fill="#ff5719" stroke="#c62c04" stroke-width="1.6"/><rect x="1860.7" y="1381.2" width="7.6" height="26.0" fill="#c9e2fb" stroke="#84b8f6" stroke-width="1.6"/><rect x="1860.7" y="1408.8" width="7.6" height="56.4" fill="#0a9e78" stroke="#0b6f55" stroke-width="1.6"/><rect x="1860.7" y="1466.7" width="7.6" height="30.6" fill="#fdd96e" stroke="#fca415" stroke-width="1.6"/><rect x="1860.7" y="1499.0" width="7.6" height="68.2" fill="#ff5719" stroke="#c62c04" stroke-width="1.6"/><rect x="1878.2" y="1401.4" width="7.6" height="68.0" fill="#c9e2fb" stroke="#84b8f6" stroke-width="1.6"/><rect x="1878.2" y="1471.0" width="7.6" height="30.4" fill="#0a9e78" stroke="#0b6f55" stroke-width="1.6"/><rect x="1878.2" y="1503.0" width="7.6" height="40.2" fill="#fdd96e" stroke="#fca415" stroke-width="1.6"/><rect x="1878.2" y="1544.9" width="7.6" height="22.3" fill="#ff5719" stroke="#c62c04" stroke-width="1.6"/><rect x="1895.7" y="1359.2" width="7.6" height="74.1" fill="#c9e2fb" stroke="#84b8f6" stroke-width="1.6"/><rect x="1895.7" y="1434.9" width="7.6" height="26.4" fill="#0a9e78" stroke="#0b6f55" stroke-width="1.6"/><rect x="1895.7" y="1462.8" width="7.6" height="70.2" fill="#fdd96e" stroke="#fca415" stroke-width="1.6"/><rect x="1895.7" y="1534.7" width="7.6" height="32.5" fill="#ff5719" stroke="#c62c04" stroke-width="1.6"/><rect x="1913.1" y="1347.1" width="7.6" height="70.2" fill="#c9e2fb" stroke="#84b8f6" stroke-width="1.6"/><rect x="1913.1" y="1419.0" width="7.6" height="26.4" fill="#0a9e78" stroke="#0b6f55" stroke-width="1.6"/><rect x="1913.1" y="1446.9" width="7.6" height="64.3" fill="#fdd96e" stroke="#fca415" stroke-width="1.6"/><rect x="1913.1" y="1512.8" width="7.6" height="54.4" fill="#ff5719" stroke="#c62c04" stroke-width="1.6"/><rect x="1930.6" y="1395.3" width="7.6" height="57.8" fill="#c9e2fb" stroke="#84b8f6" stroke-width="1.6"/><rect x="1930.6" y="1454.7" width="7.6" height="30.4" fill="#0a9e78" stroke="#0b6f55" stroke-width="1.6"/><rect x="1930.6" y="1486.7" width="7.6" height="44.3" fill="#fdd96e" stroke="#fca415" stroke-width="1.6"/><rect x="1930.6" y="1532.6" width="7.6" height="34.6" fill="#ff5719" stroke="#c62c04" stroke-width="1.6"/><rect x="1948.1" y="1397.3" width="7.6" height="67.8" fill="#c9e2fb" stroke="#84b8f6" stroke-width="1.6"/><rect x="1948.1" y="1466.7" width="7.6" height="42.5" fill="#0a9e78" stroke="#0b6f55" stroke-width="1.6"/><rect x="1948.1" y="1510.8" width="7.6" height="22.3" fill="#fdd96e" stroke="#fca415" stroke-width="1.6"/><rect x="1948.1" y="1534.7" width="7.6" height="32.5" fill="#ff5719" stroke="#c62c04" stroke-width="1.6"/><rect x="1965.5" y="1349.6" width="7.6" height="40.0" fill="#c9e2fb" stroke="#84b8f6" stroke-width="1.6"/><rect x="1965.5" y="1391.2" width="7.6" height="44.3" fill="#0a9e78" stroke="#0b6f55" stroke-width="1.6"/><rect x="1965.5" y="1437.1" width="7.6" height="74.1" fill="#fdd96e" stroke="#fca415" stroke-width="1.6"/><rect x="1965.5" y="1512.8" width="7.6" height="54.4" fill="#ff5719" stroke="#c62c04" stroke-width="1.6"/><rect x="1983.0" y="1373.5" width="7.6" height="46.0" fill="#c9e2fb" stroke="#84b8f6" stroke-width="1.6"/><rect x="1983.0" y="1421.0" width="7.6" height="34.5" fill="#0a9e78" stroke="#0b6f55" stroke-width="1.6"/><rect x="1983.0" y="1457.1" width="7.6" height="34.1" fill="#fdd96e" stroke="#fca415" stroke-width="1.6"/><rect x="1983.0" y="1492.8" width="7.6" height="74.4" fill="#ff5719" stroke="#c62c04" stroke-width="1.6"/><rect x="2000.5" y="1419.4" width="7.6" height="36.2" fill="#c9e2fb" stroke="#84b8f6" stroke-width="1.6"/><rect x="2000.5" y="1457.1" width="7.6" height="34.1" fill="#0a9e78" stroke="#0b6f55" stroke-width="1.6"/><rect x="2000.5" y="1492.8" width="7.6" height="42.3" fill="#fdd96e" stroke="#fca415" stroke-width="1.6"/><rect x="2000.5" y="1536.7" width="7.6" height="30.5" fill="#ff5719" stroke="#c62c04" stroke-width="1.6"/><rect x="2018.0" y="1337.3" width="7.6" height="53.9" fill="#c9e2fb" stroke="#84b8f6" stroke-width="1.6"/><rect x="2018.0" y="1392.8" width="7.6" height="58.6" fill="#0a9e78" stroke="#0b6f55" stroke-width="1.6"/><rect x="2018.0" y="1453.0" width="7.6" height="73.9" fill="#fdd96e" stroke="#fca415" stroke-width="1.6"/><rect x="2018.0" y="1528.6" width="7.6" height="38.6" fill="#ff5719" stroke="#c62c04" stroke-width="1.6"/><rect x="2035.5" y="1391.2" width="7.6" height="32.3" fill="#c9e2fb" stroke="#84b8f6" stroke-width="1.6"/><rect x="2035.5" y="1425.1" width="7.6" height="42.3" fill="#0a9e78" stroke="#0b6f55" stroke-width="1.6"/><rect x="2035.5" y="1469.0" width="7.6" height="72.3" fill="#fdd96e" stroke="#fca415" stroke-width="1.6"/><rect x="2035.5" y="1542.8" width="7.6" height="24.4" fill="#ff5719" stroke="#c62c04" stroke-width="1.6"/><rect x="2052.9" y="1405.5" width="7.6" height="18.0" fill="#c9e2fb" stroke="#84b8f6" stroke-width="1.6"/><rect x="2052.9" y="1425.1" width="7.6" height="36.2" fill="#0a9e78" stroke="#0b6f55" stroke-width="1.6"/><rect x="2052.9" y="1462.8" width="7.6" height="68.2" fill="#fdd96e" stroke="#fca415" stroke-width="1.6"/><rect x="2052.9" y="1532.6" width="7.6" height="34.6" fill="#ff5719" stroke="#c62c04" stroke-width="1.6"/><rect x="2070.4" y="1401.4" width="7.6" height="24.1" fill="#c9e2fb" stroke="#84b8f6" stroke-width="1.6"/><rect x="2070.4" y="1427.1" width="7.6" height="52.3" fill="#0a9e78" stroke="#0b6f55" stroke-width="1.6"/><rect x="2070.4" y="1481.0" width="7.6" height="28.2" fill="#fdd96e" stroke="#fca415" stroke-width="1.6"/><rect x="2070.4" y="1510.8" width="7.6" height="56.4" fill="#ff5719" stroke="#c62c04" stroke-width="1.6"/><rect x="2087.9" y="1403.5" width="7.6" height="36.2" fill="#c9e2fb" stroke="#84b8f6" stroke-width="1.6"/><rect x="2087.9" y="1441.2" width="7.6" height="76.2" fill="#0a9e78" stroke="#0b6f55" stroke-width="1.6"/><rect x="2087.9" y="1519.0" width="7.6" height="26.4" fill="#fdd96e" stroke="#fca415" stroke-width="1.6"/><rect x="2087.9" y="1546.9" width="7.6" height="20.3" fill="#ff5719" stroke="#c62c04" stroke-width="1.6"/><rect x="2105.4" y="1357.1" width="7.6" height="48.4" fill="#c9e2fb" stroke="#84b8f6" stroke-width="1.6"/><rect x="2105.4" y="1407.1" width="7.6" height="36.2" fill="#0a9e78" stroke="#0b6f55" stroke-width="1.6"/><rect x="2105.4" y="1444.9" width="7.6" height="74.5" fill="#fdd96e" stroke="#fca415" stroke-width="1.6"/><rect x="2105.4" y="1521.0" width="7.6" height="46.2" fill="#ff5719" stroke="#c62c04" stroke-width="1.6"/><rect x="2122.8" y="1355.7" width="7.6" height="73.9" fill="#c9e2fb" stroke="#84b8f6" stroke-width="1.6"/><rect x="2122.8" y="1431.2" width="7.6" height="68.2" fill="#0a9e78" stroke="#0b6f55" stroke-width="1.6"/><rect x="2122.8" y="1501.0" width="7.6" height="38.2" fill="#fdd96e" stroke="#fca415" stroke-width="1.6"/><rect x="2122.8" y="1540.8" width="7.6" height="26.4" fill="#ff5719" stroke="#c62c04" stroke-width="1.6"/><rect x="2140.3" y="1395.3" width="7.6" height="46.0" fill="#c9e2fb" stroke="#84b8f6" stroke-width="1.6"/><rect x="2140.3" y="1442.8" width="7.6" height="20.4" fill="#0a9e78" stroke="#0b6f55" stroke-width="1.6"/><rect x="2140.3" y="1464.9" width="7.6" height="76.4" fill="#fdd96e" stroke="#fca415" stroke-width="1.6"/><rect x="2140.3" y="1542.8" width="7.6" height="24.4" fill="#ff5719" stroke="#c62c04" stroke-width="1.6"/><rect x="2157.8" y="1347.5" width="7.6" height="56.0" fill="#c9e2fb" stroke="#84b8f6" stroke-width="1.6"/><rect x="2157.8" y="1405.1" width="7.6" height="50.4" fill="#0a9e78" stroke="#0b6f55" stroke-width="1.6"/><rect x="2157.8" y="1457.1" width="7.6" height="34.1" fill="#fdd96e" stroke="#fca415" stroke-width="1.6"/><rect x="2157.8" y="1492.8" width="7.6" height="74.4" fill="#ff5719" stroke="#c62c04" stroke-width="1.6"/><rect x="2175.2" y="1377.5" width="7.6" height="73.9" fill="#c9e2fb" stroke="#84b8f6" stroke-width="1.6"/><rect x="2175.2" y="1453.0" width="7.6" height="40.2" fill="#0a9e78" stroke="#0b6f55" stroke-width="1.6"/><rect x="2175.2" y="1494.9" width="7.6" height="48.4" fill="#fdd96e" stroke="#fca415" stroke-width="1.6"/><rect x="2175.2" y="1544.9" width="7.6" height="22.3" fill="#ff5719" stroke="#c62c04" stroke-width="1.6"/><rect x="2192.7" y="1371.4" width="7.6" height="32.1" fill="#c9e2fb" stroke="#84b8f6" stroke-width="1.6"/><rect x="2192.7" y="1405.1" width="7.6" height="72.3" fill="#0a9e78" stroke="#0b6f55" stroke-width="1.6"/><rect x="2192.7" y="1479.0" width="7.6" height="48.0" fill="#fdd96e" stroke="#fca415" stroke-width="1.6"/><rect x="2192.7" y="1528.6" width="7.6" height="38.6" fill="#ff5719" stroke="#c62c04" stroke-width="1.6"/><rect x="2210.2" y="1413.2" width="7.6" height="28.0" fill="#c9e2fb" stroke="#84b8f6" stroke-width="1.6"/><rect x="2210.2" y="1442.8" width="7.6" height="18.4" fill="#0a9e78" stroke="#0b6f55" stroke-width="1.6"/><rect x="2210.2" y="1462.8" width="7.6" height="34.5" fill="#fdd96e" stroke="#fca415" stroke-width="1.6"/><rect x="2210.2" y="1499.0" width="7.6" height="68.2" fill="#ff5719" stroke="#c62c04" stroke-width="1.6"/><rect x="2227.7" y="1381.2" width="7.6" height="22.3" fill="#c9e2fb" stroke="#84b8f6" stroke-width="1.6"/><rect x="2227.7" y="1405.1" width="7.6" height="36.2" fill="#0a9e78" stroke="#0b6f55" stroke-width="1.6"/><rect x="2227.7" y="1442.8" width="7.6" height="46.4" fill="#fdd96e" stroke="#fca415" stroke-width="1.6"/><rect x="2227.7" y="1490.8" width="7.6" height="76.4" fill="#ff5719" stroke="#c62c04" stroke-width="1.6"/><rect x="2245.2" y="1313.2" width="7.6" height="56.2" fill="#c9e2fb" stroke="#84b8f6" stroke-width="1.6"/><rect x="2245.2" y="1371.0" width="7.6" height="54.5" fill="#0a9e78" stroke="#0b6f55" stroke-width="1.6"/><rect x="2245.2" y="1427.1" width="7.6" height="72.3" fill="#fdd96e" stroke="#fca415" stroke-width="1.6"/><rect x="2245.2" y="1501.0" width="7.6" height="66.2" fill="#ff5719" stroke="#c62c04" stroke-width="1.6"/><rect x="2262.6" y="1373.5" width="7.6" height="67.8" fill="#c9e2fb" stroke="#84b8f6" stroke-width="1.6"/><rect x="2262.6" y="1442.8" width="7.6" height="50.4" fill="#0a9e78" stroke="#0b6f55" stroke-width="1.6"/><rect x="2262.6" y="1494.9" width="7.6" height="50.4" fill="#fdd96e" stroke="#fca415" stroke-width="1.6"/><rect x="2262.6" y="1546.9" width="7.6" height="20.3" fill="#ff5719" stroke="#c62c04" stroke-width="1.6"/><rect x="2280.1" y="1359.2" width="7.6" height="52.1" fill="#c9e2fb" stroke="#84b8f6" stroke-width="1.6"/><rect x="2280.1" y="1412.8" width="7.6" height="54.5" fill="#0a9e78" stroke="#0b6f55" stroke-width="1.6"/><rect x="2280.1" y="1469.0" width="7.6" height="34.5" fill="#fdd96e" stroke="#fca415" stroke-width="1.6"/><rect x="2280.1" y="1505.1" width="7.6" height="62.1" fill="#ff5719" stroke="#c62c04" stroke-width="1.6"/><rect x="2297.6" y="1417.3" width="7.6" height="54.1" fill="#c9e2fb" stroke="#84b8f6" stroke-width="1.6"/><rect x="2297.6" y="1473.0" width="7.6" height="48.4" fill="#0a9e78" stroke="#0b6f55" stroke-width="1.6"/><rect x="2297.6" y="1523.0" width="7.6" height="18.2" fill="#fdd96e" stroke="#fca415" stroke-width="1.6"/><rect x="2297.6" y="1542.8" width="7.6" height="24.4" fill="#ff5719" stroke="#c62c04" stroke-width="1.6"/><rect x="2315.1" y="1405.5" width="7.6" height="37.8" fill="#c9e2fb" stroke="#84b8f6" stroke-width="1.6"/><rect x="2315.1" y="1444.9" width="7.6" height="44.3" fill="#0a9e78" stroke="#0b6f55" stroke-width="1.6"/><rect x="2315.1" y="1490.8" width="7.6" height="36.2" fill="#fdd96e" stroke="#fca415" stroke-width="1.6"/><rect x="2315.1" y="1528.6" width="7.6" height="38.6" fill="#ff5719" stroke="#c62c04" stroke-width="1.6"/><rect x="2332.5" y="1355.1" width="7.6" height="66.4" fill="#c9e2fb" stroke="#84b8f6" stroke-width="1.6"/><rect x="2332.5" y="1423.0" width="7.6" height="44.3" fill="#0a9e78" stroke="#0b6f55" stroke-width="1.6"/><rect x="2332.5" y="1469.0" width="7.6" height="20.2" fill="#fdd96e" stroke="#fca415" stroke-width="1.6"/><rect x="2332.5" y="1490.8" width="7.6" height="76.4" fill="#ff5719" stroke="#c62c04" stroke-width="1.6"/><rect x="2350.0" y="1399.4" width="7.6" height="56.2" fill="#c9e2fb" stroke="#84b8f6" stroke-width="1.6"/><rect x="2350.0" y="1457.1" width="7.6" height="26.0" fill="#0a9e78" stroke="#0b6f55" stroke-width="1.6"/><rect x="2350.0" y="1484.7" width="7.6" height="48.4" fill="#fdd96e" stroke="#fca415" stroke-width="1.6"/><rect x="2350.0" y="1534.7" width="7.6" height="32.5" fill="#ff5719" stroke="#c62c04" stroke-width="1.6"/><rect x="2367.5" y="1383.2" width="7.6" height="52.3" fill="#c9e2fb" stroke="#84b8f6" stroke-width="1.6"/><rect x="2367.5" y="1437.1" width="7.6" height="72.1" fill="#0a9e78" stroke="#0b6f55" stroke-width="1.6"/><rect x="2367.5" y="1510.8" width="7.6" height="26.4" fill="#fdd96e" stroke="#fca415" stroke-width="1.6"/><rect x="2367.5" y="1538.8" width="7.6" height="28.4" fill="#ff5719" stroke="#c62c04" stroke-width="1.6"/><rect x="2385.0" y="1403.0" width="7.6" height="36.6" fill="#c9e2fb" stroke="#84b8f6" stroke-width="1.6"/><rect x="2385.0" y="1441.2" width="7.6" height="39.8" fill="#0a9e78" stroke="#0b6f55" stroke-width="1.6"/><rect x="2385.0" y="1482.6" width="7.6" height="62.7" fill="#fdd96e" stroke="#fca415" stroke-width="1.6"/><rect x="2385.0" y="1546.9" width="7.6" height="20.3" fill="#ff5719" stroke="#c62c04" stroke-width="1.6"/><rect x="2402.4" y="1383.2" width="7.6" height="30.0" fill="#c9e2fb" stroke="#84b8f6" stroke-width="1.6"/><rect x="2402.4" y="1414.9" width="7.6" height="48.4" fill="#0a9e78" stroke="#0b6f55" stroke-width="1.6"/><rect x="2402.4" y="1464.9" width="7.6" height="24.3" fill="#fdd96e" stroke="#fca415" stroke-width="1.6"/><rect x="2402.4" y="1490.8" width="7.6" height="76.4" fill="#ff5719" stroke="#c62c04" stroke-width="1.6"/><rect x="2419.9" y="1351.2" width="7.6" height="48.2" fill="#c9e2fb" stroke="#84b8f6" stroke-width="1.6"/><rect x="2419.9" y="1401.0" width="7.6" height="20.4" fill="#0a9e78" stroke="#0b6f55" stroke-width="1.6"/><rect x="2419.9" y="1423.0" width="7.6" height="76.4" fill="#fdd96e" stroke="#fca415" stroke-width="1.6"/><rect x="2419.9" y="1501.0" width="7.6" height="66.2" fill="#ff5719" stroke="#c62c04" stroke-width="1.6"/><rect x="2437.4" y="1383.2" width="7.6" height="48.2" fill="#c9e2fb" stroke="#84b8f6" stroke-width="1.6"/><rect x="2437.4" y="1433.0" width="7.6" height="30.2" fill="#0a9e78" stroke="#0b6f55" stroke-width="1.6"/><rect x="2437.4" y="1464.9" width="7.6" height="44.3" fill="#fdd96e" stroke="#fca415" stroke-width="1.6"/><rect x="2437.4" y="1510.8" width="7.6" height="56.4" fill="#ff5719" stroke="#c62c04" stroke-width="1.6"/><rect x="2454.9" y="1405.5" width="7.6" height="52.1" fill="#c9e2fb" stroke="#84b8f6" stroke-width="1.6"/><rect x="2454.9" y="1459.2" width="7.6" height="26.0" fill="#0a9e78" stroke="#0b6f55" stroke-width="1.6"/><rect x="2454.9" y="1486.7" width="7.6" height="42.3" fill="#fdd96e" stroke="#fca415" stroke-width="1.6"/><rect x="2454.9" y="1530.6" width="7.6" height="36.6" fill="#ff5719" stroke="#c62c04" stroke-width="1.6"/><rect x="2472.3" y="1415.3" width="7.6" height="22.3" fill="#c9e2fb" stroke="#84b8f6" stroke-width="1.6"/><rect x="2472.3" y="1439.2" width="7.6" height="24.1" fill="#0a9e78" stroke="#0b6f55" stroke-width="1.6"/><rect x="2472.3" y="1464.9" width="7.6" height="54.5" fill="#fdd96e" stroke="#fca415" stroke-width="1.6"/><rect x="2472.3" y="1521.0" width="7.6" height="46.2" fill="#ff5719" stroke="#c62c04" stroke-width="1.6"/><rect x="2489.8" y="1387.1" width="7.6" height="38.4" fill="#c9e2fb" stroke="#84b8f6" stroke-width="1.6"/><rect x="2489.8" y="1427.1" width="7.6" height="24.3" fill="#0a9e78" stroke="#0b6f55" stroke-width="1.6"/><rect x="2489.8" y="1453.0" width="7.6" height="44.3" fill="#fdd96e" stroke="#fca415" stroke-width="1.6"/><rect x="2489.8" y="1499.0" width="7.6" height="68.2" fill="#ff5719" stroke="#c62c04" stroke-width="1.6"/><rect x="2507.3" y="1467.3" width="7.6" height="21.9" fill="#c9e2fb" stroke="#84b8f6" stroke-width="1.6"/><rect x="2507.3" y="1490.8" width="7.6" height="18.4" fill="#0a9e78" stroke="#0b6f55" stroke-width="1.6"/><rect x="2507.3" y="1510.8" width="7.6" height="32.5" fill="#fdd96e" stroke="#fca415" stroke-width="1.6"/><rect x="2507.3" y="1544.9" width="7.6" height="22.3" fill="#ff5719" stroke="#c62c04" stroke-width="1.6"/><rect x="2524.8" y="1459.2" width="7.6" height="18.2" fill="#c9e2fb" stroke="#84b8f6" stroke-width="1.6"/><rect x="2524.8" y="1479.0" width="7.6" height="38.4" fill="#0a9e78" stroke="#0b6f55" stroke-width="1.6"/><rect x="2524.8" y="1519.0" width="7.6" height="22.3" fill="#fdd96e" stroke="#fca415" stroke-width="1.6"/><rect x="2524.8" y="1542.8" width="7.6" height="24.4" fill="#ff5719" stroke="#c62c04" stroke-width="1.6"/><rect x="2542.2" y="1417.3" width="7.6" height="22.3" fill="#c9e2fb" stroke="#84b8f6" stroke-width="1.6"/><rect x="2542.2" y="1441.2" width="7.6" height="28.2" fill="#0a9e78" stroke="#0b6f55" stroke-width="1.6"/><rect x="2542.2" y="1471.0" width="7.6" height="50.4" fill="#fdd96e" stroke="#fca415" stroke-width="1.6"/><rect x="2542.2" y="1523.0" width="7.6" height="44.2" fill="#ff5719" stroke="#c62c04" stroke-width="1.6"/><rect x="2559.7" y="1423.5" width="7.6" height="17.8" fill="#c9e2fb" stroke="#84b8f6" stroke-width="1.6"/><rect x="2559.7" y="1442.8" width="7.6" height="32.5" fill="#0a9e78" stroke="#0b6f55" stroke-width="1.6"/><rect x="2559.7" y="1476.9" width="7.6" height="24.5" fill="#fdd96e" stroke="#fca415" stroke-width="1.6"/><rect x="2559.7" y="1503.0" width="7.6" height="64.2" fill="#ff5719" stroke="#c62c04" stroke-width="1.6"/><rect x="2577.2" y="1377.1" width="7.6" height="58.4" fill="#c9e2fb" stroke="#84b8f6" stroke-width="1.6"/><rect x="2577.2" y="1437.1" width="7.6" height="43.9" fill="#0a9e78" stroke="#0b6f55" stroke-width="1.6"/><rect x="2577.2" y="1482.6" width="7.6" height="48.4" fill="#fdd96e" stroke="#fca415" stroke-width="1.6"/><rect x="2577.2" y="1532.6" width="7.6" height="34.6" fill="#ff5719" stroke="#c62c04" stroke-width="1.6"/><rect x="2594.7" y="1391.9" width="7.6" height="31.8" fill="#c9e2fb" stroke="#84b8f6" stroke-width="1.6"/><rect x="2594.7" y="1425.3" width="7.6" height="54.6" fill="#0a9e78" stroke="#0b6f55" stroke-width="1.6"/><rect x="2594.7" y="1481.5" width="7.6" height="42.2" fill="#fdd96e" stroke="#fca415" stroke-width="1.6"/><rect x="2594.7" y="1525.2" width="7.6" height="42.0" fill="#ff5719" stroke="#c62c04" stroke-width="1.6"/><rect x="2612.1" y="1331.6" width="7.6" height="33.9" fill="#c9e2fb" stroke="#84b8f6" stroke-width="1.6"/><rect x="2612.1" y="1367.1" width="7.6" height="66.3" fill="#0a9e78" stroke="#0b6f55" stroke-width="1.6"/><rect x="2612.1" y="1435.0" width="7.6" height="62.8" fill="#fdd96e" stroke="#fca415" stroke-width="1.6"/><rect x="2612.1" y="1499.4" width="7.6" height="67.8" fill="#ff5719" stroke="#c62c04" stroke-width="1.6"/><rect x="2629.6" y="1365.4" width="7.6" height="64.5" fill="#c9e2fb" stroke="#84b8f6" stroke-width="1.6"/><rect x="2629.6" y="1431.5" width="7.6" height="74.2" fill="#0a9e78" stroke="#0b6f55" stroke-width="1.6"/><rect x="2629.6" y="1507.3" width="7.6" height="30.4" fill="#fdd96e" stroke="#fca415" stroke-width="1.6"/><rect x="2629.6" y="1539.3" width="7.6" height="27.9" fill="#ff5719" stroke="#c62c04" stroke-width="1.6"/><rect x="2647.1" y="1355.7" width="7.6" height="29.7" fill="#c9e2fb" stroke="#84b8f6" stroke-width="1.6"/><rect x="2647.1" y="1387.1" width="7.6" height="76.6" fill="#0a9e78" stroke="#0b6f55" stroke-width="1.6"/><rect x="2647.1" y="1465.3" width="7.6" height="38.4" fill="#fdd96e" stroke="#fca415" stroke-width="1.6"/><rect x="2647.1" y="1505.2" width="7.6" height="62.0" fill="#ff5719" stroke="#c62c04" stroke-width="1.6"/><rect x="2664.6" y="1361.9" width="7.6" height="63.9" fill="#c9e2fb" stroke="#84b8f6" stroke-width="1.6"/><rect x="2664.6" y="1427.4" width="7.6" height="50.1" fill="#0a9e78" stroke="#0b6f55" stroke-width="1.6"/><rect x="2664.6" y="1479.1" width="7.6" height="56.6" fill="#fdd96e" stroke="#fca415" stroke-width="1.6"/><rect x="2664.6" y="1537.3" width="7.6" height="29.9" fill="#ff5719" stroke="#c62c04" stroke-width="1.6"/><rect x="2682.0" y="1397.8" width="7.6" height="62.1" fill="#c9e2fb" stroke="#84b8f6" stroke-width="1.6"/><rect x="2682.0" y="1461.5" width="7.6" height="34.6" fill="#0a9e78" stroke="#0b6f55" stroke-width="1.6"/><rect x="2682.0" y="1497.7" width="7.6" height="44.2" fill="#fdd96e" stroke="#fca415" stroke-width="1.6"/><rect x="2682.0" y="1543.5" width="7.6" height="23.7" fill="#ff5719" stroke="#c62c04" stroke-width="1.6"/></svg>
<div class="t" style="left:2716.0px;top:361.5px;font-size:21.3px;line-height:21.3px;font-weight:400;color:#7b6562;letter-spacing:0px;font-family:'Liberation Sans', sans-serif;">100</div>
<div class="t" style="left:2716.0px;top:449.0px;font-size:21.3px;line-height:21.3px;font-weight:400;color:#7b6562;letter-spacing:0px;font-family:'Liberation Sans', sans-serif;">90</div>
<div class="t" style="left:2716.0px;top:537.5px;font-size:21.3px;line-height:21.3px;font-weight:400;color:#7b6562;letter-spacing:0px;font-family:'Liberation Sans', sans-serif;">80</div>
<div class="t" style="left:2716.0px;top:625.0px;font-size:21.3px;line-height:21.3px;font-weight:400;color:#7b6562;letter-spacing:0px;font-family:'Liberation Sans', sans-serif;">70</div>
<div class="t" style="left:2716.0px;top:713.0px;font-size:21.3px;line-height:21.3px;font-weight:400;color:#7b6562;letter-spacing:0px;font-family:'Liberation Sans', sans-serif;">60</div>
<div class="t" style="left:2716.0px;top:1147.5px;font-size:21.3px;line-height:21.3px;font-weight:400;color:#7b6562;letter-spacing:0px;font-family:'Liberation Sans', sans-serif;">100 ms</div>
<div class="t" style="left:2716.0px;top:1235.3px;font-size:21.3px;line-height:21.3px;font-weight:400;color:#7b6562;letter-spacing:0px;font-family:'Liberation Sans', sans-serif;">90 ms</div>
<div class="t" style="left:2716.0px;top:1323.0px;font-size:21.3px;line-height:21.3px;font-weight:400;color:#7b6562;letter-spacing:0px;font-family:'Liberation Sans', sans-serif;">80 ms</div>
<div class="t" style="left:2716.0px;top:1411.0px;font-size:21.3px;line-height:21.3px;font-weight:400;color:#7b6562;letter-spacing:0px;font-family:'Liberation Sans', sans-serif;">70 ms</div>
<div class="t" style="left:2716.0px;top:1498.8px;font-size:21.3px;line-height:21.3px;font-weight:400;color:#7b6562;letter-spacing:0px;font-family:'Liberation Sans', sans-serif;">60 ms</div>
<div class="t" style="left:1667.0px;top:801.4px;font-size:21.3px;line-height:21.3px;font-weight:400;color:#7b6562;letter-spacing:-0.5px;font-family:'Liberation Sans', sans-serif;">27. Jun</div>
<div class="t" style="left:1667.0px;top:1587.0px;font-size:21.3px;line-height:21.3px;font-weight:400;color:#7b6562;letter-spacing:-0.5px;font-family:'Liberation Sans', sans-serif;">27. Jun</div>
<div class="t" style="left:1842.0px;top:801.4px;font-size:21.3px;line-height:21.3px;font-weight:400;color:#7b6562;letter-spacing:-0.5px;font-family:'Liberation Sans', sans-serif;">2. Jul</div>
<div class="t" style="left:1842.0px;top:1587.0px;font-size:21.3px;line-height:21.3px;font-weight:400;color:#7b6562;letter-spacing:-0.5px;font-family:'Liberation Sans', sans-serif;">2. Jul</div>
<div class="t" style="left:2016.0px;top:801.4px;font-size:21.3px;line-height:21.3px;font-weight:400;color:#7b6562;letter-spacing:-0.5px;font-family:'Liberation Sans', sans-serif;">7. Jul</div>
<div class="t" style="left:2016.0px;top:1587.0px;font-size:21.3px;line-height:21.3px;font-weight:400;color:#7b6562;letter-spacing:-0.5px;font-family:'Liberation Sans', sans-serif;">7. Jul</div>
<div class="t" style="left:2191.0px;top:801.4px;font-size:21.3px;line-height:21.3px;font-weight:400;color:#7b6562;letter-spacing:-0.5px;font-family:'Liberation Sans', sans-serif;">12. Jul</div>
<div class="t" style="left:2191.0px;top:1587.0px;font-size:21.3px;line-height:21.3px;font-weight:400;color:#7b6562;letter-spacing:-0.5px;font-family:'Liberation Sans', sans-serif;">12. Jul</div>
<div class="t" style="left:2366.0px;top:801.4px;font-size:21.3px;line-height:21.3px;font-weight:400;color:#7b6562;letter-spacing:-0.5px;font-family:'Liberation Sans', sans-serif;">17. Jul</div>
<div class="t" style="left:2366.0px;top:1587.0px;font-size:21.3px;line-height:21.3px;font-weight:400;color:#7b6562;letter-spacing:-0.5px;font-family:'Liberation Sans', sans-serif;">17. Jul</div>
<div class="t" style="left:2541.0px;top:801.4px;font-size:21.3px;line-height:21.3px;font-weight:400;color:#7b6562;letter-spacing:-0.5px;font-family:'Liberation Sans', sans-serif;">22. Jul</div>
<div class="t" style="left:2541.0px;top:1587.0px;font-size:21.3px;line-height:21.3px;font-weight:400;color:#7b6562;letter-spacing:-0.5px;font-family:'Liberation Sans', sans-serif;">22. Jul</div>
<div class="t" style="left:1650.3px;top:896.6px;font-size:25px;line-height:25px;font-weight:400;color:#1c1718;letter-spacing:0.29px;font-family:'Liberation Sans', sans-serif;">Besuche insgesamt: 25, 323</div>
<div class="t" style="left:1651.0px;top:1026.1px;font-size:42px;line-height:42px;font-weight:700;color:#1c1718;letter-spacing:-0.5px;font-family:'Liberation Sans', sans-serif;">Gesamt-Transaktionszeit</div>
<div class="t" style="left:1698.0px;top:1673.1px;font-size:30px;line-height:30px;font-weight:400;color:#7b6562;letter-spacing:-0.15px;font-family:'Liberation Sans', sans-serif;">Technologie</div>
<div class="t" style="left:2783.0px;top:1673.1px;font-size:30px;line-height:30px;font-weight:400;color:#7b6562;letter-spacing:-0.2px;font-family:'Liberation Sans', sans-serif;transform:translateX(-100%);">Gesamt-Transaktionszeit</div>
<div style="position:absolute;left:1650px;top:1742px;width:1182px;height:2px;background:#c9b2ac;"></div>
<div style="position:absolute;left:1698px;top:1805px;width:24px;height:24px;box-sizing:border-box;border-radius:50%;background:#ff5717;border:1.5px solid #cf3b0d;"></div>
<div class="t" style="left:1738.0px;top:1802.4px;font-size:29px;line-height:29px;font-weight:400;color:#1c1718;letter-spacing:-1.5px;font-family:'Liberation Sans', sans-serif;">PHP</div>
<div class="t" style="left:2783.0px;top:1802.4px;font-size:29px;line-height:29px;font-weight:400;color:#1c1718;letter-spacing:-0.5px;font-family:'Liberation Sans', sans-serif;transform:translateX(-100%);">21.2 ms</div>
</body></html>
